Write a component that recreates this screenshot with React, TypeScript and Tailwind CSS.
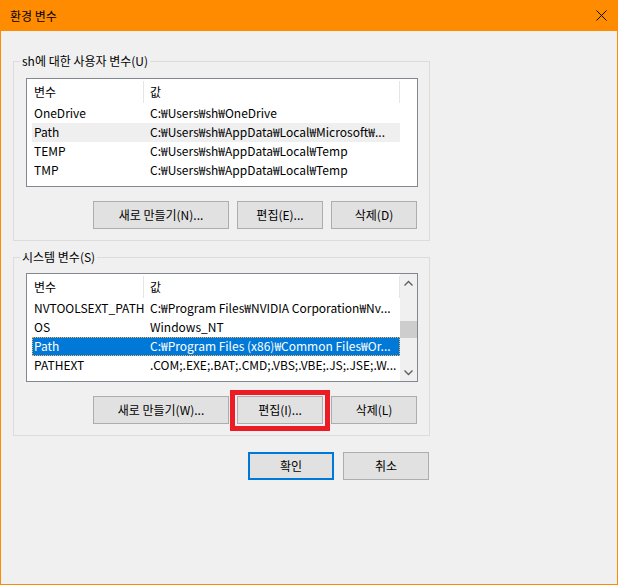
import { ReactNode } from "react";

type Row = { name: string; value: string };

const userVars: Row[] = [
  { name: "OneDrive", value: "C:₩Users₩sh₩OneDrive" },
  { name: "Path", value: "C:₩Users₩sh₩AppData₩Local₩Microsoft₩..." },
  { name: "TEMP", value: "C:₩Users₩sh₩AppData₩Local₩Temp" },
  { name: "TMP", value: "C:₩Users₩sh₩AppData₩Local₩Temp" },
];

const systemVars: Row[] = [
  { name: "NVTOOLSEXT_PATH", value: "C:₩Program Files₩NVIDIA Corporation₩Nv..." },
  { name: "OS", value: "Windows_NT" },
  { name: "Path", value: "C:₩Program Files (x86)₩Common Files₩Or..." },
  { name: "PATHEXT", value: ".COM;.EXE;.BAT;.CMD;.VBS;.VBE;.JS;.JSE;.W..." },
];

const font = { fontFamily: '"Noto Sans CJK KR", "Noto Sans", sans-serif' };

const Header = () => (
  <div className="flex h-[25px] pl-[5px]">
    <div className="w-[112px] shrink-0 flex items-center">
      <span className="flex-1 pl-[2px] leading-[25px]">변수</span>
      <span className="w-px h-[22px] bg-[#e5e5e5]" />
    </div>
    <div className="w-[256px] shrink-0 flex items-center">
      <span className="flex-1 pl-[6px] leading-[25px]">값</span>
      <span className="w-px h-[22px] bg-[#e5e5e5]" />
    </div>
  </div>
);

const ListRow = ({
  row,
  state,
}: {
  row: Row;
  state?: "hover" | "selected";
}) => {
  const base = "ml-[5px] w-[368px] h-[19px] flex whitespace-nowrap";
  const look =
    state === "selected"
      ? "bg-[#0078d7] text-white border border-dotted border-[#ffb44a]"
      : state === "hover"
      ? "bg-[#efefef] border border-transparent"
      : "border border-transparent";
  return (
    <div className={`${base} ${look}`}>
      <span className="w-[111px] shrink-0 pl-[1px] leading-[16px] overflow-hidden">
        {row.name}
      </span>
      <span className="flex-1 pl-[6px] leading-[16px] overflow-hidden">
        {row.value}
      </span>
    </div>
  );
};

const Chevron = ({ up }: { up?: boolean }) => (
  <svg width="9" height="6" viewBox="0 0 9 6">
    <path
      d={up ? "M0.5 5.5 L4.5 1.5 L8.5 5.5" : "M0.5 0.5 L4.5 4.5 L8.5 0.5"}
      fill="none"
      stroke="#606060"
      strokeWidth="1.4"
    />
  </svg>
);

const Button = ({
  children,
  wide,
  primary,
}: {
  children: ReactNode;
  wide?: boolean;
  primary?: boolean;
}) => (
  <button
    className={`${wide ? "w-[136px]" : "w-[86px]"} h-[28px] bg-[#e1e1e1] text-black text-[12px] leading-none ${
      primary ? "border-2 border-[#0078d7]" : "border border-[#adadad]"
    }`}
  >
    {children}
  </button>
);

const Group = ({
  title,
  children,
  className = "",
}: {
  title: string;
  children: ReactNode;
  className?: string;
}) => (
  <fieldset className={`w-[417px] border border-[#dcdcdc] ${className}`}>
    <legend className="ml-[6px] px-[2px] leading-[16px]">{title}</legend>
    <div className="pl-[12px] pr-[11px] pb-[11px]">{children}</div>
  </fieldset>
);

export default function App() {
  return (
    <div
      className="w-[618px] h-[585px] bg-[#ff8c00] flex flex-col px-[1px] pb-[1px] text-[12px] text-black"
      style={font}
    >
      {/* title bar */}
      <div className="h-[31px] shrink-0 flex items-center justify-between pl-[9px] pr-[10px]">
        <span className="leading-none">환경 변수</span>
        <svg width="11" height="11" viewBox="0 0 11 11">
          <path d="M0.5 0.5 L10.5 10.5 M10.5 0.5 L0.5 10.5" stroke="#000" strokeWidth="1" />
        </svg>
      </div>

      <div className="flex-1 bg-[#f0f0f0] pl-[12px] pt-[22px]">
        <Group title="sh에 대한 사용자 변수(U)">
          <div className="mt-[9px] h-[109px] border border-[#828790] bg-white">
            <Header />
            {userVars.map((r, i) => (
              <ListRow key={r.name} row={r} state={i === 1 ? "hover" : undefined} />
            ))}
          </div>
          <div className="mt-[14px] flex justify-end gap-[8px] pr-[1px]">
            <Button wide>새로 만들기(N)...</Button>
            <Button>편집(E)...</Button>
            <Button>삭제(D)</Button>
          </div>
        </Group>

        <Group title="시스템 변수(S)" className="mt-[8px]">
          <div className="mt-[8px] h-[109px] border border-[#828790] bg-white flex">
            <div className="w-[373px]">
              <Header />
              {systemVars.map((r, i) => (
                <ListRow key={r.name} row={r} state={i === 2 ? "selected" : undefined} />
              ))}
            </div>
            <div className="w-[17px] bg-[#f0f0f0] flex flex-col">
              <div className="h-[17px] flex items-center justify-center">
                <Chevron up />
              </div>
              <div className="flex-1">
                <div className="mt-[30px] h-[17px] bg-[#cdcdcd]" />
              </div>
              <div className="h-[17px] flex items-center justify-center">
                <Chevron />
              </div>
            </div>
          </div>
          <div className="mt-[14px] flex justify-end gap-[8px] pr-[1px]">
            <Button wide>새로 만들기(W)...</Button>
            <div className="relative">
              <Button>편집(I)...</Button>
              <span className="absolute -left-[7px] -right-[7px] -top-[6px] -bottom-[7px] border-[5px] border-[#ed1c24] pointer-events-none" />
            </div>
            <Button>삭제(L)</Button>
          </div>
        </Group>

        <div className="w-[417px] mt-[16px] flex justify-end gap-[9px] pr-[1px]">
          <Button primary>확인</Button>
          <Button>취소</Button>
        </div>
      </div>
    </div>
  );
}
